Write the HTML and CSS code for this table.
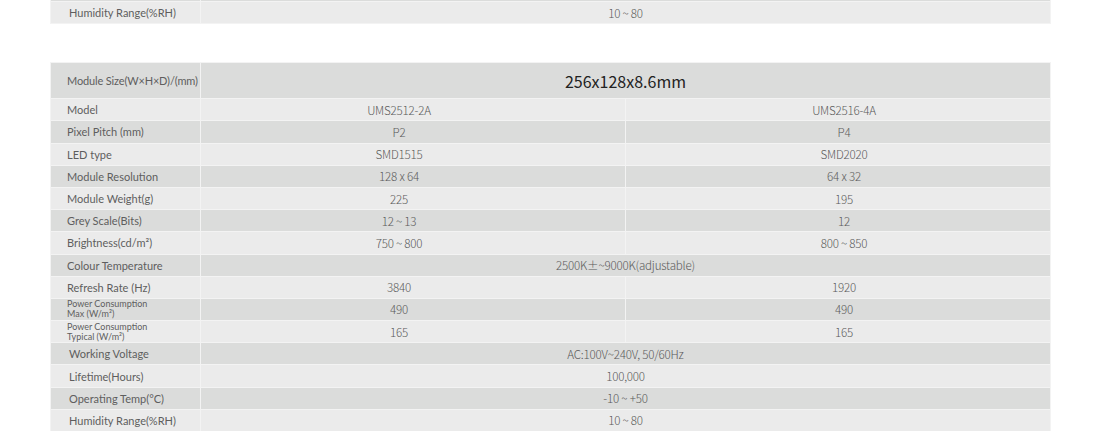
FILE: index.html
```html
<!DOCTYPE html>
<html lang="en">

<head>
    <meta charset="UTF-8">
    <title>Module Specification</title>
    <meta name="viewport" content="width=device-width, initial-scale=1.0">
    <link rel="stylesheet" href="styles.css">
</head>

<body>
    <div class="container">
        <table class="spec spec-prev">
            <colgroup>
                <col class="c-label">
                <col class="c-val">
                <col class="c-val">
            </colgroup>
            <tr class="dark cut">
                <td></td>
                <td colspan="2"></td>
            </tr>
            <tr>
                <td class="label label-wide">Humidity Range(%RH)</td>
                <td class="val" colspan="2">10 ~ 80</td>
            </tr>
        </table>

        <table class="spec">
            <colgroup>
                <col class="c-label">
                <col class="c-val">
                <col class="c-val">
            </colgroup>
            <tr class="dark head">
                <td class="label label-tight">Module Size(W×H×D)/(mm)</td>
                <td class="size" colspan="2">256x128x8.6mm</td>
            </tr>
            <tr>
                <td class="label">Model</td>
                <td class="val col-a">UMS2512-2A</td>
                <td class="val col-b">UMS2516-4A</td>
            </tr>
            <tr class="dark">
                <td class="label">Pixel Pitch (mm)</td>
                <td class="val col-a">P2</td>
                <td class="val col-b">P4</td>
            </tr>
            <tr>
                <td class="label">LED type</td>
                <td class="val col-a">SMD1515</td>
                <td class="val col-b">SMD2020</td>
            </tr>
            <tr class="dark">
                <td class="label">Module Resolution</td>
                <td class="val col-a">128 x 64</td>
                <td class="val col-b">64 x 32</td>
            </tr>
            <tr>
                <td class="label">Module Weight(g)</td>
                <td class="val col-a">225</td>
                <td class="val col-b">195</td>
            </tr>
            <tr class="dark">
                <td class="label">Grey Scale(Bits)</td>
                <td class="val col-a">12 ~ 13</td>
                <td class="val col-b">12</td>
            </tr>
            <tr>
                <td class="label">Brightness(cd/m²)</td>
                <td class="val col-a">750 ~ 800</td>
                <td class="val col-b">800 ~ 850</td>
            </tr>
            <tr class="dark">
                <td class="label">Colour Temperature</td>
                <td class="val" colspan="2">2500K±~9000K(adjustable)</td>
            </tr>
            <tr>
                <td class="label">Refresh Rate (Hz)</td>
                <td class="val col-a">3840</td>
                <td class="val col-b">1920</td>
            </tr>
            <tr class="dark">
                <td class="label small">Power Consumption<br>Max (W/m²)</td>
                <td class="val col-a">490</td>
                <td class="val col-b">490</td>
            </tr>
            <tr>
                <td class="label small">Power Consumption<br>Typical (W/m²)</td>
                <td class="val col-a">165</td>
                <td class="val col-b">165</td>
            </tr>
            <tr class="dark">
                <td class="label label-wide">Working Voltage</td>
                <td class="val" colspan="2">AC:100V~240V, 50/60Hz</td>
            </tr>
            <tr>
                <td class="label label-wide">Lifetime(Hours)</td>
                <td class="val" colspan="2">100,000</td>
            </tr>
            <tr class="dark">
                <td class="label label-wide">Operating Temp(°C)</td>
                <td class="val" colspan="2">-10 ~ +50</td>
            </tr>
            <tr>
                <td class="label label-wide">Humidity Range(%RH)</td>
                <td class="val" colspan="2">10 ~ 80</td>
            </tr>
        </table>
    </div>
</body>

</html>
```

FILE: styles.css
```css
body,
html {
    margin: 0;
    padding: 0;
    background-color: #ffffff;
}

.container {
    width: 1000px;
    padding-left: 50px;
}

.spec {
    width: 1000px;
    border-collapse: collapse;
    table-layout: fixed;
}

.spec-prev {
    margin-top: -1px;
    margin-bottom: 38px;
}

.c-label {
    width: 150px;
}

.c-val {
    width: 425px;
}

.spec td {
    height: 21.2px;
    padding: 0;
    border: 1px solid #f3f3f3;
    background-color: #ebebeb;
    vertical-align: middle;
}

.spec tr.dark td {
    background-color: #dbdcdb;
}

/* tail of the row above, cut by the window */
.spec tr.cut td {
    height: 1px;
}

.spec tr.head td {
    height: 35px;
}

.label {
    padding-left: 16px !important;
    font-family: Lato, "Open Sans", sans-serif;
    font-size: 11px;
    color: #5e5e5e;
    white-space: nowrap;
}

.label-wide {
    padding-left: 18px !important;
}

.label-tight {
    letter-spacing: -0.15px;
}

.label.small {
    font-size: 9px;
    line-height: 10px;
}

.val {
    text-align: center;
    font-family: "Noto Sans CJK SC", "Liberation Sans", sans-serif;
    font-weight: 300;
    font-size: 11.6px;
    letter-spacing: -0.2px;
    color: #5a5a5a;
}

.col-a {
    padding-right: 28px !important;
}

.col-b {
    padding-left: 12px !important;
}

.size {
    text-align: center;
    font-family: "Noto Sans CJK SC", "Liberation Sans", sans-serif;
    font-size: 16px;
    color: #222222;
}
```
